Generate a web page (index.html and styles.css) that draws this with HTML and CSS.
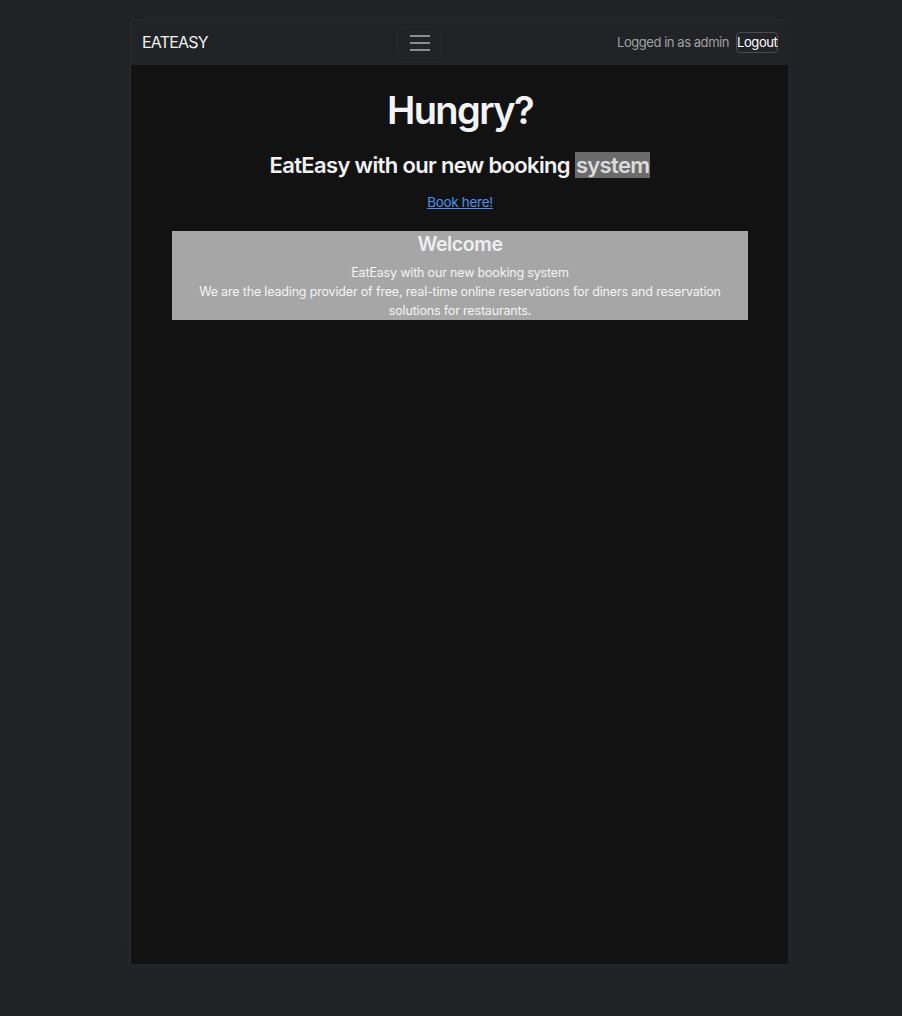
FILE: index.html
```html
<!DOCTYPE html>
<html lang="en">
<head>
<meta charset="utf-8">
<title>EatEasy</title>
<link rel="stylesheet" href="styles.css">
</head>
<body>
<div class="app">
  <nav class="navbar">
    <a class="brand" href="#">EATEASY</a>
    <button class="toggler" type="button" aria-label="Toggle navigation">
      <svg width="22" height="18" viewBox="0 0 22 18"><path d="M1 2h20M1 9h20M1 16h20" stroke="#8a8c90" stroke-width="2"/></svg>
    </button>
    <div class="user">
      <span class="logged">Logged in as admin</span>
      <button class="logout" type="button">Logout</button>
    </div>
  </nav>
  <main class="main">
    <h1 class="title">Hungry?</h1>
    <h2 class="subtitle">EatEasy with our new booking <mark class="hl">system</mark></h2>
    <p class="cta"><a href="#">Book here!</a></p>
    <section class="welcome">
      <h3 class="welcome-title">Welcome</h3>
      <p class="welcome-text">EatEasy with our new booking system<br>We are the leading provider of free, real-time online reservations for diners and reservation solutions for restaurants.</p>
    </section>
  </main>
</div>
</body>
</html>
```

FILE: styles.css
```css
* { box-sizing: border-box; }
html, body { height: 100%; }
body {
  margin: 0;
  background: #212225;
  font-family: Inter, "Noto Sans", sans-serif;
  color: #eee;
  padding: 20px 0 52px;
}
.app {
  width: 658px;
  height: 944px;
  margin: 0 0 0 130px;
  display: flex;
  flex-direction: column;
  border-left: 1px solid #2a2b2e;
  box-shadow: 0 0 18px rgba(255,255,255,0.025);
}
.navbar {
  height: 45px;
  flex: none;
  background: #212326;
  border-top: 1px solid #28292c;
  display: flex;
  align-items: center;
  padding: 0 10px 2px 11px;
  position: relative;
}
.brand {
  color: #f2f2f2;
  font-size: 16px;
  text-decoration: none;
  letter-spacing: -0.8px;
}
.toggler {
  position: absolute;
  left: 266px;
  top: 6px;
  width: 45px;
  height: 32px;
  background: transparent;
  border: 1px solid #26282b;
  border-radius: 6px;
  display: flex;
  align-items: center;
  justify-content: center;
  padding: 0;
}
.user {
  margin-left: auto;
  display: flex;
  align-items: center;
  gap: 7px;
}
.logged {
  color: #a0a1a3;
  font-size: 13px;
  letter-spacing: -0.45px;
}
.logout {
  background: transparent;
  color: #fff;
  border: 1px solid #4a4b4e;
  border-radius: 4px;
  font-family: inherit;
  font-size: 13px;
  letter-spacing: -0.4px;
  padding: 1px 0;
  width: 42px;
  height: 21px;
  line-height: 17px;
}
.main {
  flex: 1;
  background: #121212;
  padding: 22px 40px 0 41px;
  text-align: center;
}
.title {
  margin: 0;
  font-size: 38px;
  font-weight: 600;
  line-height: 46px;
  color: #f3f4f8;
  letter-spacing: -1.6px;
}
.subtitle {
  margin: 18px 0 0;
  font-size: 22px;
  font-weight: 600;
  line-height: 28px;
  color: #f3f4f8;
  letter-spacing: -0.65px;
}
.hl {
  background: #6b6b6b;
  color: #dcdcdc;
  padding: 0 1px;
}
.cta {
  margin: 14px 0 0;
  font-size: 13.5px;
  line-height: 18px;
  letter-spacing: -0.3px;
}
.cta a { color: #4b8ff0; }
.welcome {
  margin-top: 20px;
  background: #a6a6a6;
  padding: 0 10px;
}
.welcome-title {
  margin: 0;
  font-size: 19.5px;
  font-weight: 600;
  line-height: 26px;
  color: #eeeef0;
  letter-spacing: -0.4px;
}
.welcome-text {
  margin: 6px 0 0;
  font-size: 12.5px;
  line-height: 19px;
  color: #f4f4f4;
  letter-spacing: -0.17px;
}
```
